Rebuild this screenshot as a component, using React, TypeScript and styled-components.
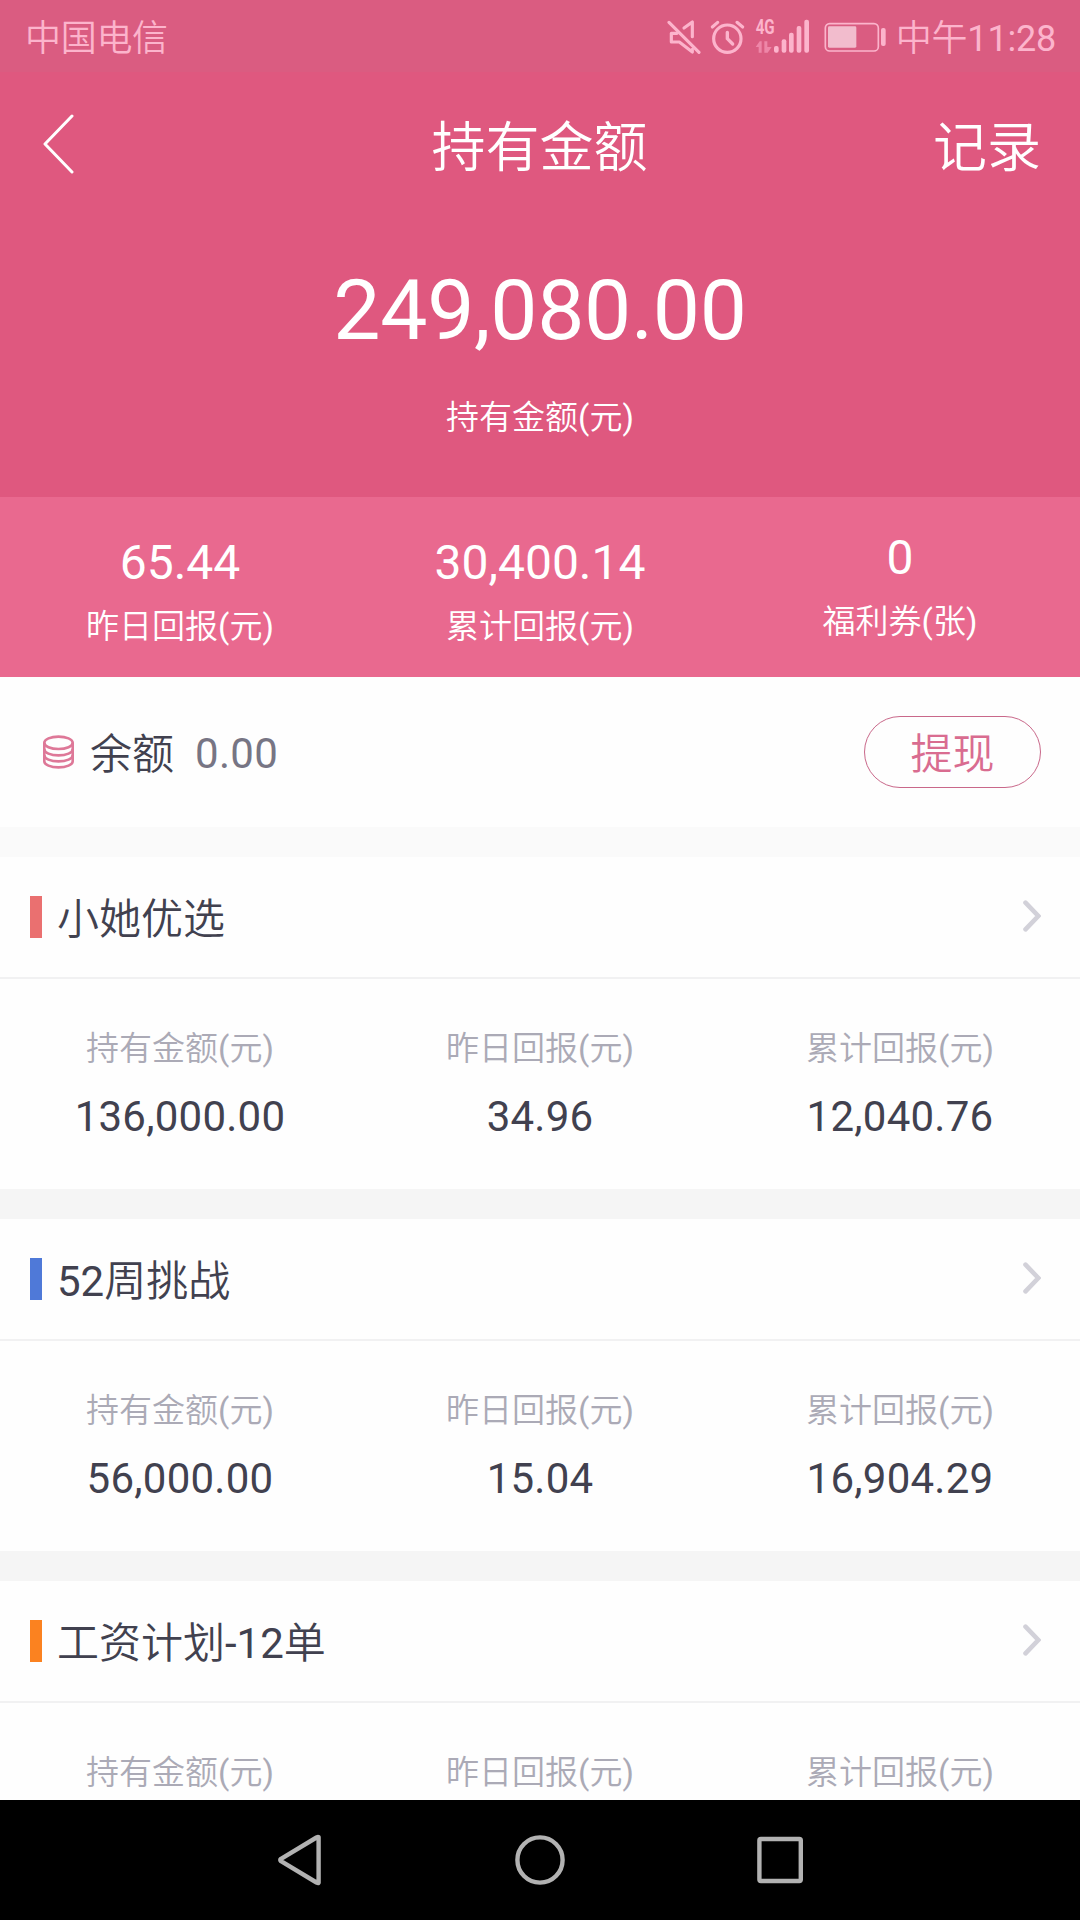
import React from "react";
import styled, { createGlobalStyle } from "styled-components";

const GlobalStyle = createGlobalStyle`
  * { box-sizing: border-box; }
  body {
    margin: 0;
    background: #fff;
    font-family: Roboto, "Noto Sans CJK SC DemiLight", "Noto Sans CJK SC", sans-serif;
  }
`;

const Screen = styled.div`
  width: 1080px;
  height: 1920px;
  display: flex;
  flex-direction: column;
  overflow: hidden;
  background: #fefefe;
  color: #41414f;
`;

const StatusBar = styled.div`
  flex: none;
  height: 72px;
  padding: 5px 24px 0 25px;
  display: flex;
  align-items: center;
  background: #da5c81;
  color: #fcb4cc;
  font-size: 36px;
  line-height: 44px;
`;

const Carrier = styled.span`
  flex: 1;
  letter-spacing: -0.3px;
`;

const StatusIcons = styled.svg`
  width: 220px;
  height: 60px;
  margin: 0 9px 5px 0;
`;

const Clock = styled.span`
  letter-spacing: -0.2px;
`;

const Hero = styled.section`
  flex: none;
  height: 425px;
  display: flex;
  flex-direction: column;
  align-items: center;
  background: #df587f;
  color: #fff;
`;

const NavRow = styled.header`
  width: 100%;
  height: 144px;
  padding: 0 39px 0 41px;
  display: grid;
  grid-template-columns: 1fr auto 1fr;
  align-items: center;
  font-size: 54px;
  line-height: 64px;
`;

const BackIcon = styled.svg`
  width: 34px;
  height: 60px;
`;

const Title = styled.h1`
  margin: 10px 3px 0 0;
  font-size: inherit;
  font-weight: 400;
`;

const RecordLink = styled.span`
  justify-self: end;
  margin-top: 10px;
`;

const Total = styled.div`
  margin-top: 45px;
  font-size: 84px;
  line-height: 100px;
  letter-spacing: -0.3px;
`;

const TotalLabel = styled.div`
  margin-top: 37px;
  font-size: 33px;
  line-height: 40px;
`;

const Stats = styled.section`
  flex: none;
  height: 180px;
  display: grid;
  grid-template-columns: repeat(3, 1fr);
  background: #e9698f;
  color: #fff;
`;

const Stat = styled.div<{ $raised?: boolean }>`
  padding-top: ${(p) => (p.$raised ? 33 : 38)}px;
  display: flex;
  flex-direction: column;
  align-items: center;
  gap: 16px;
`;

const StatValue = styled.div`
  font-size: 48px;
  line-height: 56px;
`;

const StatLabel = styled.div`
  font-size: 33px;
  line-height: 40px;
`;

const Balance = styled.section`
  flex: none;
  height: 150px;
  padding: 0 39px 0 42px;
  display: flex;
  align-items: center;
  font-size: 42px;
  line-height: 50px;
`;

const CoinsIcon = styled.svg`
  width: 33px;
  height: 36px;
  margin-right: 15px;
`;

const BalanceLabel = styled.span`
  padding-top: 6px;
`;

const BalanceValue = styled.span`
  flex: 1;
  padding-top: 4px;
  margin-left: 21px;
  color: #777584;
  letter-spacing: 0.3px;
`;

const WithdrawButton = styled.button`
  width: 177px;
  height: 72px;
  padding: 6px 0 0;
  border: 1px solid #c9688a;
  border-radius: 36px;
  background: transparent;
  color: #d96c90;
  font: inherit;
`;

const Gap = styled.div<{ $light?: boolean }>`
  flex: none;
  height: 30px;
  background: ${(p) => (p.$light ? "#fafafa" : "#f5f5f5")};
`;

const PlanHeader = styled.div`
  flex: none;
  height: 122px;
  padding: 0 39px 0 30px;
  display: flex;
  align-items: center;
  border-bottom: 2px solid #f1f1f2;
`;

const Marker = styled.span<{ $color: string }>`
  width: 12px;
  height: 42px;
  background: ${(p) => p.$color};
`;

const PlanName = styled.h2`
  flex: 1;
  margin: 6px 0 0 15px;
  font-size: 42px;
  font-weight: 400;
  line-height: 50px;
`;

const ChevronIcon = styled.svg`
  width: 18px;
  height: 32px;
  margin-bottom: 3px;
`;

const PlanBody = styled.div`
  flex: none;
  height: 210px;
  padding-top: 50px;
  display: grid;
  grid-template-columns: repeat(3, 1fr);
`;

const Figure = styled.div`
  display: flex;
  flex-direction: column;
  align-items: center;
  gap: 23px;
`;

const FigureLabel = styled.div`
  color: #abaab6;
  font-size: 33px;
  line-height: 40px;
`;

const FigureValue = styled.div`
  font-size: 42px;
  line-height: 50px;
  letter-spacing: 0.25px;
`;

const Content = styled.main`
  flex: 1;
  min-height: 0;
  display: flex;
  flex-direction: column;
  overflow: hidden;
`;

const SystemNav = styled.nav`
  flex: none;
  height: 120px;
  display: flex;
  align-items: center;
  justify-content: center;
  gap: 180px;
  background: #000;
`;

const NavIcon = styled.svg`
  width: 60px;
  height: 60px;
  fill: none;
  stroke: #b2b2b2;
  stroke-width: 4.4;
  stroke-linejoin: round;
`;

const plans = [
  { name: "小她优选", color: "#ea7070", values: ["136,000.00", "34.96", "12,040.76"] },
  { name: "52周挑战", color: "#4f79d8", values: ["56,000.00", "15.04", "16,904.29"] },
  { name: "工资计划-12单", color: "#fb8220", values: ["", "", ""] },
];

const labels = ["持有金额(元)", "昨日回报(元)", "累计回报(元)"];

export default function App() {
  return (
    <Screen>
      <GlobalStyle />
      <StatusBar>
        <Carrier>中国电信</Carrier>
        <StatusIcons viewBox="78 16 660 180">
          <g fill="none" stroke="#fcb4cc" strokeWidth="9.5" strokeLinecap="round">
            <path d="M84 65 174 155" />
            <path d="M129 82 154 64V108M108 98H91V124H115L154 154V146" strokeLinejoin="round" />
            <circle cx="259" cy="114" r="41" />
            <path d="M259 95V114L275 130" strokeWidth="10" strokeLinejoin="round" />
            <path d="M214 79 230 65M288 65 305 79" />
          </g>
          <text
            x="344"
            y="101"
            fill="#fcb4cc"
            fontSize="59"
            fontWeight="700"
            textLength="57"
            lengthAdjust="spacingAndGlyphs"
          >
            4G
          </text>
          <path
            d="M344 139 356 122H362V156H353V139ZM392 139 380 156H370V122H379V139Z"
            fill="#ee86a8"
          />
          <g fill="#fcb4cc">
            <rect x="399" y="136" width="14" height="20" rx="6" />
            <rect x="422" y="116" width="14" height="40" rx="6" />
            <rect x="444" y="96" width="14" height="60" rx="6" />
            <rect x="467" y="76" width="14" height="80" rx="6" />
            <rect x="490" y="57" width="14" height="99" rx="6" />
            <rect x="720" y="82" width="14" height="54" rx="6" />
          </g>
          <rect x="561" y="77" width="85" height="64" rx="4" fill="#f2bccd" />
          <rect x="553" y="69" width="159" height="82" rx="13" fill="none" stroke="#fcb4cc" strokeWidth="5" />
        </StatusIcons>
        <Clock>中午11:28</Clock>
      </StatusBar>

      <Hero>
        <NavRow>
          <BackIcon viewBox="0 0 34 60" fill="none" stroke="#fff" strokeWidth="3" strokeLinecap="round" strokeLinejoin="round">
            <path d="M31 2 4 30 31 58" />
          </BackIcon>
          <Title>持有金额</Title>
          <RecordLink>记录</RecordLink>
        </NavRow>
        <Total>249,080.00</Total>
        <TotalLabel>持有金额(元)</TotalLabel>
      </Hero>

      <Stats>
        <Stat>
          <StatValue>65.44</StatValue>
          <StatLabel>昨日回报(元)</StatLabel>
        </Stat>
        <Stat>
          <StatValue>30,400.14</StatValue>
          <StatLabel>累计回报(元)</StatLabel>
        </Stat>
        <Stat $raised>
          <StatValue>0</StatValue>
          <StatLabel>福利券(张)</StatLabel>
        </Stat>
      </Stats>

      <Content>
        <Balance>
          <CoinsIcon viewBox="0 0 33 36" fill="none" stroke="#de7898" strokeWidth="2.6">
            <ellipse cx="16.5" cy="8.8" rx="14.2" ry="6.2" />
            <path d="M2.3 8.8V15.2A14.2 6.2 0 0 0 30.7 15.2V8.8" />
            <path d="M2.3 15V21.2A14.2 6.2 0 0 0 30.7 21.2V15" />
            <path d="M2.3 21V27.2A14.2 6.2 0 0 0 30.7 27.2V21" />
          </CoinsIcon>
          <BalanceLabel>余额</BalanceLabel>
          <BalanceValue>0.00</BalanceValue>
          <WithdrawButton>提现</WithdrawButton>
        </Balance>
        {plans.map((plan, i) => (
          <React.Fragment key={plan.name}>
            <Gap $light={i === 0} />
            <PlanHeader>
              <Marker $color={plan.color} />
              <PlanName>{plan.name}</PlanName>
              <ChevronIcon viewBox="0 0 18 32" fill="none" stroke="#d2d1d9" strokeWidth="4.6" strokeLinecap="round">
                <path d="M2.5 2.7 15.3 16 2.5 29.3" />
              </ChevronIcon>
            </PlanHeader>
            <PlanBody>
              {labels.map((label, j) => (
                <Figure key={label}>
                  <FigureLabel>{label}</FigureLabel>
                  <FigureValue>{plan.values[j]}</FigureValue>
                </Figure>
              ))}
            </PlanBody>
          </React.Fragment>
        ))}
      </Content>

      <SystemNav>
        <NavIcon viewBox="0 0 60 60">
          <path d="M48.6 7.2V52.8Q48 53.2 46.5 52.5L11 31.2Q9.5 30 11 28.8L46.5 7.5Q48 6.8 48.6 7.2Z" />
        </NavIcon>
        <NavIcon viewBox="0 0 60 60">
          <circle cx="30" cy="30" r="22.6" />
        </NavIcon>
        <NavIcon viewBox="0 0 60 60">
          <rect x="9.4" y="9" width="41.4" height="42" rx="1.5" />
        </NavIcon>
      </SystemNav>
    </Screen>
  );
}
